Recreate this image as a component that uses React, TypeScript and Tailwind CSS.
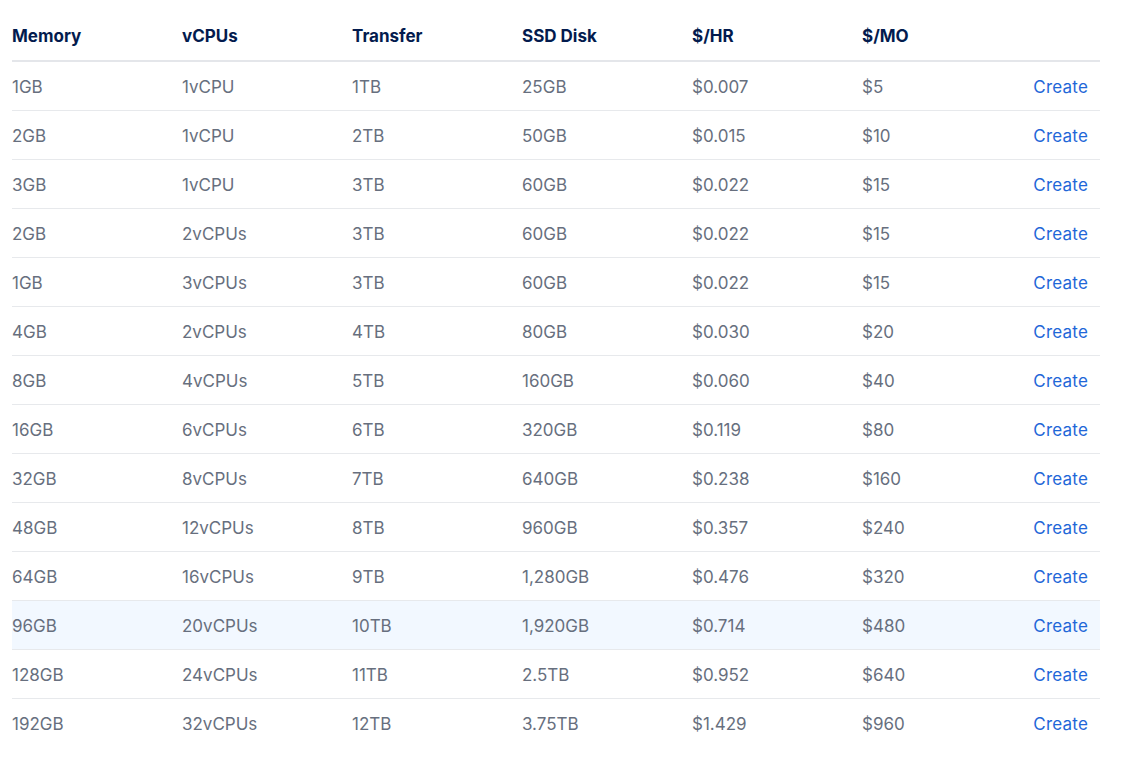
import React from 'react';

const rows = [
  ['1GB', '1vCPU', '1TB', '25GB', '$0.007', '$5'],
  ['2GB', '1vCPU', '2TB', '50GB', '$0.015', '$10'],
  ['3GB', '1vCPU', '3TB', '60GB', '$0.022', '$15'],
  ['2GB', '2vCPUs', '3TB', '60GB', '$0.022', '$15'],
  ['1GB', '3vCPUs', '3TB', '60GB', '$0.022', '$15'],
  ['4GB', '2vCPUs', '4TB', '80GB', '$0.030', '$20'],
  ['8GB', '4vCPUs', '5TB', '160GB', '$0.060', '$40'],
  ['16GB', '6vCPUs', '6TB', '320GB', '$0.119', '$80'],
  ['32GB', '8vCPUs', '7TB', '640GB', '$0.238', '$160'],
  ['48GB', '12vCPUs', '8TB', '960GB', '$0.357', '$240'],
  ['64GB', '16vCPUs', '9TB', '1,280GB', '$0.476', '$320'],
  ['96GB', '20vCPUs', '10TB', '1,920GB', '$0.714', '$480'],
  ['128GB', '24vCPUs', '11TB', '2.5TB', '$0.952', '$640'],
  ['192GB', '32vCPUs', '12TB', '3.75TB', '$1.429', '$960'],
];

const headers = ['Memory', 'vCPUs', 'Transfer', 'SSD Disk', '$/HR', '$/MO'];

export default function App() {
  return (
    <div className="w-[1125px] h-[778px] bg-white pl-3 pt-3" style={{ fontFamily: 'Inter, "Noto Sans", sans-serif' }}>
      <div className="w-[1088px]">
        {/* header */}
        <div className="grid grid-cols-[170px_170px_170px_170px_170px_1fr] h-[50px] items-center border-b-2 border-[#e4e6ea] pt-[2px]">
          {headers.map((h) => (
            <div key={h} className="text-[17px] font-bold text-[#031b4e]">{h}</div>
          ))}
        </div>

        {rows.map((r, i) => (
          <div
            key={i}
            className={`grid grid-cols-[170px_170px_170px_170px_170px_1fr_auto] h-[49px] items-center pr-3 pt-[3px] ${i === rows.length - 1 ? '' : 'border-b border-[#e7e9ec]'} ${i === 11 ? 'bg-[#f2f8ff]' : ''}`}
          >
            {r.map((c, j) => (
              <div key={j} className="text-[17px] text-[#676f7e]">{c}</div>
            ))}
            <a className="text-[17px] text-[#1f67d8] tracking-[0.2px]">Create</a>
          </div>
        ))}
      </div>
    </div>
  );
}
